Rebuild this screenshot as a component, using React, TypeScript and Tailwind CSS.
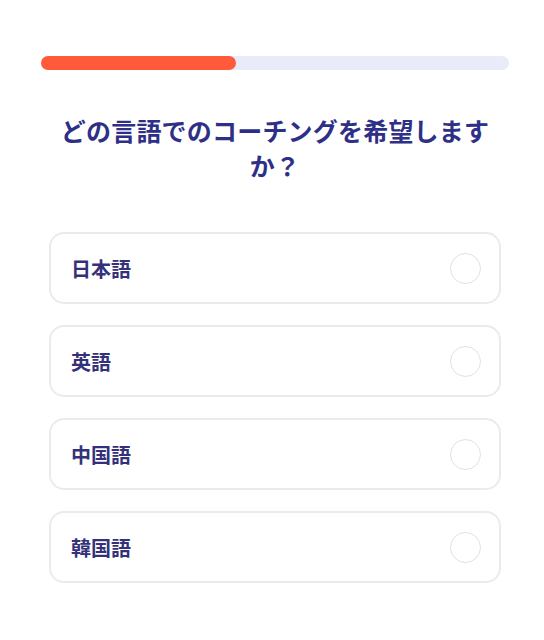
const options = ["日本語", "英語", "中国語", "韓国語"];

export default function App() {
  return (
    <div
      className="min-h-[640px] w-[544px] bg-white pt-[56px] pl-[41px] pr-[35px]"
      style={{ fontFamily: '"Noto Sans CJK JP", "Noto Sans", sans-serif' }}
    >
      <div className="h-[14px] w-[468px] rounded-full bg-[#e9ecf8]">
        <div className="h-full w-[195px] rounded-full bg-[#ff5a3a]" />
      </div>

      <h1 className="mx-auto mt-[43px] w-[440px] text-center text-[25px] font-bold leading-[35px] tracking-[0.2px] text-[#2e3087]">
        どの言語でのコーチングを希望しますか？
      </h1>

      <div className="mt-[49px] flex flex-col gap-[21px] px-[8px]">
        {options.map((label) => (
          <button
            key={label}
            className="flex h-[72px] w-[452px] items-center justify-between rounded-[15px] border-2 border-[#ebebed] bg-white pl-[20px] pr-[18px] text-left"
          >
            <span className="pt-[2px] text-[20px] font-bold text-[#34317a]">{label}</span>
            <span className="h-[31px] w-[31px] rounded-full border-[1.5px] border-[#e1e1e3]" />
          </button>
        ))}
      </div>
    </div>
  );
}
